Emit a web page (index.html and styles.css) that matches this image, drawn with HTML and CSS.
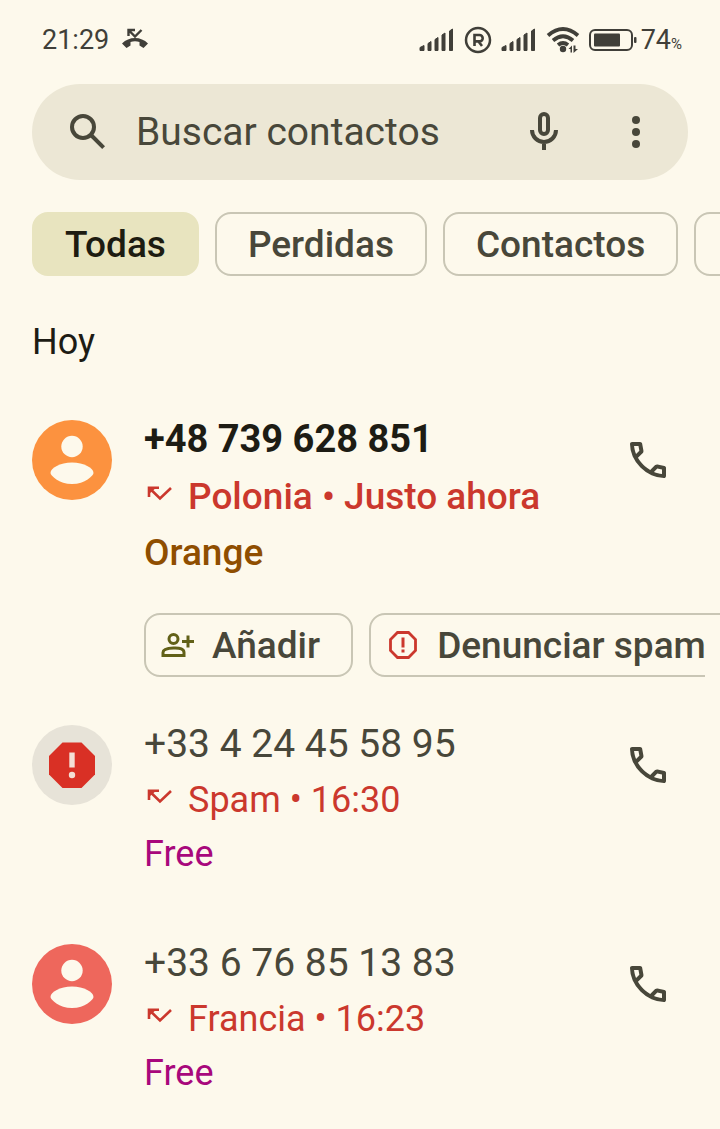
FILE: index.html
```
<!DOCTYPE html>
<html lang="es">
<head>
	<meta charset="UTF-8">
	<meta name="viewport" content="width=device-width, initial-scale=1">
	<title>Llamadas</title>
	<link rel="stylesheet" href="styles.css">
</head>
<body>
	<svg class="defs" aria-hidden="true">
		<symbol id="signal" viewBox="0 0 36 24">
			<path d="M1 22.500V19.500L5 17.500V22.500zM9 22.500V15.500L12 13.500V22.500zM16 22.500V11.500L19 9.500V22.500zM23 22.500V7L26 5V22.500zM30.500 22.500V3L33.500 1V22.500z" stroke="currentColor" stroke-linejoin="round"/>
		</symbol>
		<symbol id="person" viewBox="0 0 80 80">
			<circle cx="40" cy="26.500" r="10.700"/>
			<path d="M40 42.500C52 42.500 61.500 48 61.500 53C61.500 55.500 53 64 40 64S18.500 55.500 18.500 53C18.500 48 28 42.500 40 42.500z"/>
		</symbol>
		<symbol id="missed" viewBox="0 0 28 24">
			<path d="M5 16V6.700H15M5 6.700L16 17.500L27 7" fill="none" stroke="currentColor" stroke-width="2.600"/>
			<path d="M4 6H13L5 13z"/>
		</symbol>
		<symbol id="call" viewBox="0 0 24 24">
			<path d="M19.950 21q-3.125 0-6.175-1.362t-5.550-3.863-3.862-5.550T3 4.050q0-.45.3-.75t.75-.3H8.100q.35 0 .625.238t.325.562l.65 3.500q.05.4-.025.675T9.400 8.450L6.975 10.900q.5.925 1.187 1.787t1.513 1.663q.775.775 1.625 1.438T13.100 17l2.350-2.350q.225-.225.588-.337t.712-.063l3.450.7q.35.1.575.363T21 15.900v4.050q0 .45-.3.750t-.75.3M6.025 9l1.650-1.650L7.250 5H5.025q.125 1.025.35 2.025T6.025 9m8.950 8.950q.975.425 1.988.675T19 18.950v-2.200l-2.350-.475z"/>
		</symbol>
	</svg>

	<header class="status">
		<div class="status-side">
			<span>21:29</span>
			<svg class="missed-status" viewBox="0 0 28 24">
				<path d="M7.500 8V2H14M8 2.500L14 8.500L20.500 2" fill="none" stroke="currentColor" stroke-width="2.400"/>
				<path d="M1 15.500Q6.500 10 14 10T27 15.500L22.500 20L18.500 17.500V14Q14 12.500 9.500 14V17.500L5.500 20z"/>
			</svg>
		</div>
		<div class="status-side status-icons">
			<svg class="signal"><use href="#signal"/></svg>
			<svg class="roaming" viewBox="0 0 28 28">
				<circle cx="14" cy="14" r="12" fill="none" stroke="currentColor" stroke-width="2.500"/>
				<path d="M10.500 20V9H15.500a3.200 3.200 0 0 1 0 6.400H10.500M14.500 15.500L18 20" fill="none" stroke="currentColor" stroke-width="2.600"/>
			</svg>
			<svg class="signal"><use href="#signal"/></svg>
			<svg class="wifi" viewBox="0 0 34 28">
				<path d="M2 9.500Q17-3.500 32 9.500M7 14.500Q17 6 27 14.500M12 19Q17 15 22 19" fill="none" stroke="currentColor" stroke-width="3.800"/>
				<circle cx="17" cy="23" r="3.200"/>
				<path d="M22.500 23L26 19.500V26.500H24.500V23zM27.500 19.500H29.500V23H32L27.500 27z"/>
			</svg>
			<svg class="battery" viewBox="0 0 48 22">
				<rect x="1" y="1" width="42" height="20" rx="5" fill="none" stroke="currentColor" stroke-width="2"/>
				<rect x="5" y="4.500" width="26" height="13" rx="1"/>
				<rect x="45" y="8" width="2.500" height="6" rx="1"/>
			</svg>
			<span>74<span class="percent">%</span></span>
		</div>
	</header>

	<form class="search" role="search">
		<svg class="icon" viewBox="0 0 24 24"><circle cx="9.500" cy="9.500" r="5.500" fill="none" stroke="currentColor" stroke-width="2"/><path d="M13.500 13.500L19.800 19.800" stroke="currentColor" stroke-width="2"/></svg>
		<input class="search-input" type="text" placeholder="Buscar contactos" aria-label="Buscar contactos">
		<button class="icon-button mic" type="button" aria-label="Búsqueda por voz">
			<svg class="icon" viewBox="0 0 24 24"><rect x="10" y="3" width="4" height="10" rx="2" fill="none" stroke="currentColor" stroke-width="2"/><path d="M6 11a6 6 0 0 0 12 0M12 17v4" fill="none" stroke="currentColor" stroke-width="2"/></svg>
		</button>
		<button class="icon-button" type="button" aria-label="Más opciones">
			<svg class="icon" viewBox="0 0 24 24"><circle cx="12" cy="6" r="2"/><circle cx="12" cy="12" r="2"/><circle cx="12" cy="18" r="2"/></svg>
		</button>
	</form>

	<nav class="filters" aria-label="Filtros">
		<button class="chip chip-active" type="button">Todas</button>
		<button class="chip" type="button">Perdidas</button>
		<button class="chip" type="button">Contactos</button>
		<button class="chip chip-empty" type="button" aria-label="Más filtros"></button>
	</nav>

	<main>
		<h2 class="day">Hoy</h2>

		<article class="call call-new">
			<div class="avatar avatar-orange"><svg><use href="#person"/></svg></div>
			<div class="details">
				<p class="number">+48 739 628 851</p>
				<p class="info"><svg class="missed"><use href="#missed"/></svg>Polonia • Justo ahora</p>
				<p class="carrier orange">Orange</p>
			</div>
			<button class="icon-button" type="button" aria-label="Llamar al +48 739 628 851"><svg class="icon"><use href="#call"/></svg></button>
		</article>

		<div class="actions">
			<button class="chip action" type="button">
				<svg class="add" viewBox="0 0 36 36">
					<g fill="none" stroke="currentColor" stroke-width="3">
						<circle cx="13.500" cy="12" r="4.500"/>
						<path d="M3 28.500V25.500Q3 21.500 13.500 21T24 25.500V28.500zM28 8.500V20.500M22 14.500H34"/>
					</g>
				</svg>
				Añadir
			</button>
			<button class="chip action" type="button">
				<svg class="report" viewBox="0 0 36 36">
					<path d="M12.500 5.500H23.500L30.500 12.500V23.500L23.500 30.500H12.500L5.500 23.500V12.500z" fill="none" stroke="currentColor" stroke-width="2.800"/>
					<path d="M16.500 10.500h3v10h-3zM16.500 22.500h3v3h-3z"/>
				</svg>
				Denunciar spam
			</button>
		</div>

		<article class="call">
			<div class="avatar avatar-spam">
				<svg viewBox="0 0 80 80">
					<path d="M30.500 17.500H49.500L63 31V49.500L49.500 63H30.500L17 49.500V31z" fill="#d93025"/>
					<path d="M37.300 27.500h5.400v15h-5.400z"/><circle cx="40" cy="50" r="3.200"/>
				</svg>
			</div>
			<div class="details">
				<p class="number">+33 4 24 45 58 95</p>
				<p class="info"><svg class="missed"><use href="#missed"/></svg>Spam • 16:30</p>
				<p class="carrier free">Free</p>
			</div>
			<button class="icon-button" type="button" aria-label="Llamar al +33 4 24 45 58 95"><svg class="icon"><use href="#call"/></svg></button>
		</article>

		<article class="call">
			<div class="avatar avatar-red"><svg><use href="#person"/></svg></div>
			<div class="details">
				<p class="number">+33 6 76 85 13 83</p>
				<p class="info"><svg class="missed"><use href="#missed"/></svg>Francia • 16:23</p>
				<p class="carrier free">Free</p>
			</div>
			<button class="icon-button" type="button" aria-label="Llamar al +33 6 76 85 13 83"><svg class="icon"><use href="#call"/></svg></button>
		</article>
	</main>
</body>
</html>
```
FILE: styles.css
```
* {
	box-sizing: border-box;
}

body {
	margin: 0;
	overflow-x: hidden;
	background: #fdf9ec;
	color: #48473a;
	font-family: Roboto, "Liberation Sans", sans-serif;
	font-size: 36px;
}

button, input {
	border: 0;
	padding: 0;
	background: none;
	color: inherit;
	font: inherit;
}

svg {
	display: block;
	flex: none;
	fill: currentColor;
}

p, h2 {
	margin: 0;
}

.defs {
	position: absolute;
	width: 0;
	height: 0;
}

/* status bar */
.status {
	display: flex;
	justify-content: space-between;
	height: 84px;
	padding: 0 38px 4px 42px;
	color: #403f39;
	font-size: 27px;
}

.status-side {
	display: flex;
	align-items: center;
	gap: 12px;
}

.status-icons {
	gap: 9px;
}

.missed-status {
	width: 28px;
	height: 24px;
}

.signal {
	width: 36px;
	height: 24px;
}

.roaming {
	width: 28px;
	height: 28px;
}

.wifi {
	width: 34px;
	height: 28px;
}

.battery {
	width: 48px;
	height: 22px;
}

.status-icons > span {
	margin-left: -5px;
}

.percent {
	font-size: 15px;
}

/* search */
.search {
	display: flex;
	align-items: center;
	height: 96px;
	margin: 0 32px;
	padding: 0 28px 0 32px;
	border-radius: 48px;
	background: #ece7d5;
}

.search-input {
	flex: 1;
	min-width: 0;
	margin-left: 24px;
	outline: 0;
	font-size: 39px;
}

.search-input::placeholder {
	color: #48473a;
	opacity: 1;
}

.icon {
	width: 48px;
	height: 48px;
}

.icon-button {
	flex: none;
}

.mic {
	margin-right: 44px;
}

/* chips */
.filters {
	display: flex;
	gap: 16px;
	padding: 32px 0 0 32px;
	overflow: hidden;
}

.chip {
	flex: none;
	height: 64px;
	padding: 0 31px;
	border: 2px solid #c9c6b5;
	border-radius: 16px;
	font-size: 37px;
	font-weight: 500;
	white-space: nowrap;
}

.chip-active {
	border-color: #e8e4bf;
	background: #e8e4bf;
	color: #1d1c11;
}

.chip-empty {
	width: 160px;
}

.day {
	padding: 38px 32px 0;
	color: #1d1c14;
	font-size: 36px;
	font-weight: 400;
	line-height: 56px;
}

/* call log */
.call {
	display: flex;
	align-items: flex-start;
	padding: 0 48px 0 32px;
	margin-top: 53px;
}

.call-new {
	margin-top: 40px;
}

.avatar {
	flex: none;
	width: 80px;
	height: 80px;
	margin-top: 10px;
	border-radius: 50%;
	color: #fdf9ec;
}

.avatar svg {
	width: 80px;
	height: 80px;
}

.avatar-orange {
	background: #fc923f;
}

.avatar-red {
	background: #ee675c;
}

.avatar-spam {
	background: #e7e3d8;
	color: #f4dfd5;
}

.details {
	flex: 1;
	min-width: 0;
	margin-left: 32px;
}

.number {
	font-size: 39px;
	line-height: 58px;
}

.info {
	display: flex;
	align-items: center;
	color: #cb382d;
	line-height: 54px;
}

.carrier {
	line-height: 54px;
}

.call-new .number {
	color: #1d1c14;
	font-size: 38px;
	font-weight: 700;
}

.call-new .info,
.call-new .carrier {
	font-size: 37px;
	font-weight: 500;
}

.call-new .info {
	line-height: 58px;
}

.missed {
	width: 28px;
	height: 24px;
	margin: 0 16px 8px 0;
}

.orange {
	color: #8f4e00;
}

.free {
	color: #a8087c;
}

.call .icon-button {
	margin-top: 26px;
}

.actions {
	position: relative;
	display: flex;
	gap: 16px;
	padding: 33px 0 0 144px;
	overflow: hidden;
}

/* hides the end of the last chip's lower border */
.actions::after {
	content: "";
	position: absolute;
	right: 0;
	bottom: 0;
	width: 15px;
	height: 2px;
	background: #fdf9ec;
}

.action {
	display: flex;
	align-items: center;
	gap: 16px;
	padding: 0 31px 0 14px;
}

.action svg {
	width: 36px;
	height: 36px;
}

.add {
	color: #626118;
}

.report {
	color: #cb382d;
}

.actions + .call {
	margin-top: 38px;
}
```
